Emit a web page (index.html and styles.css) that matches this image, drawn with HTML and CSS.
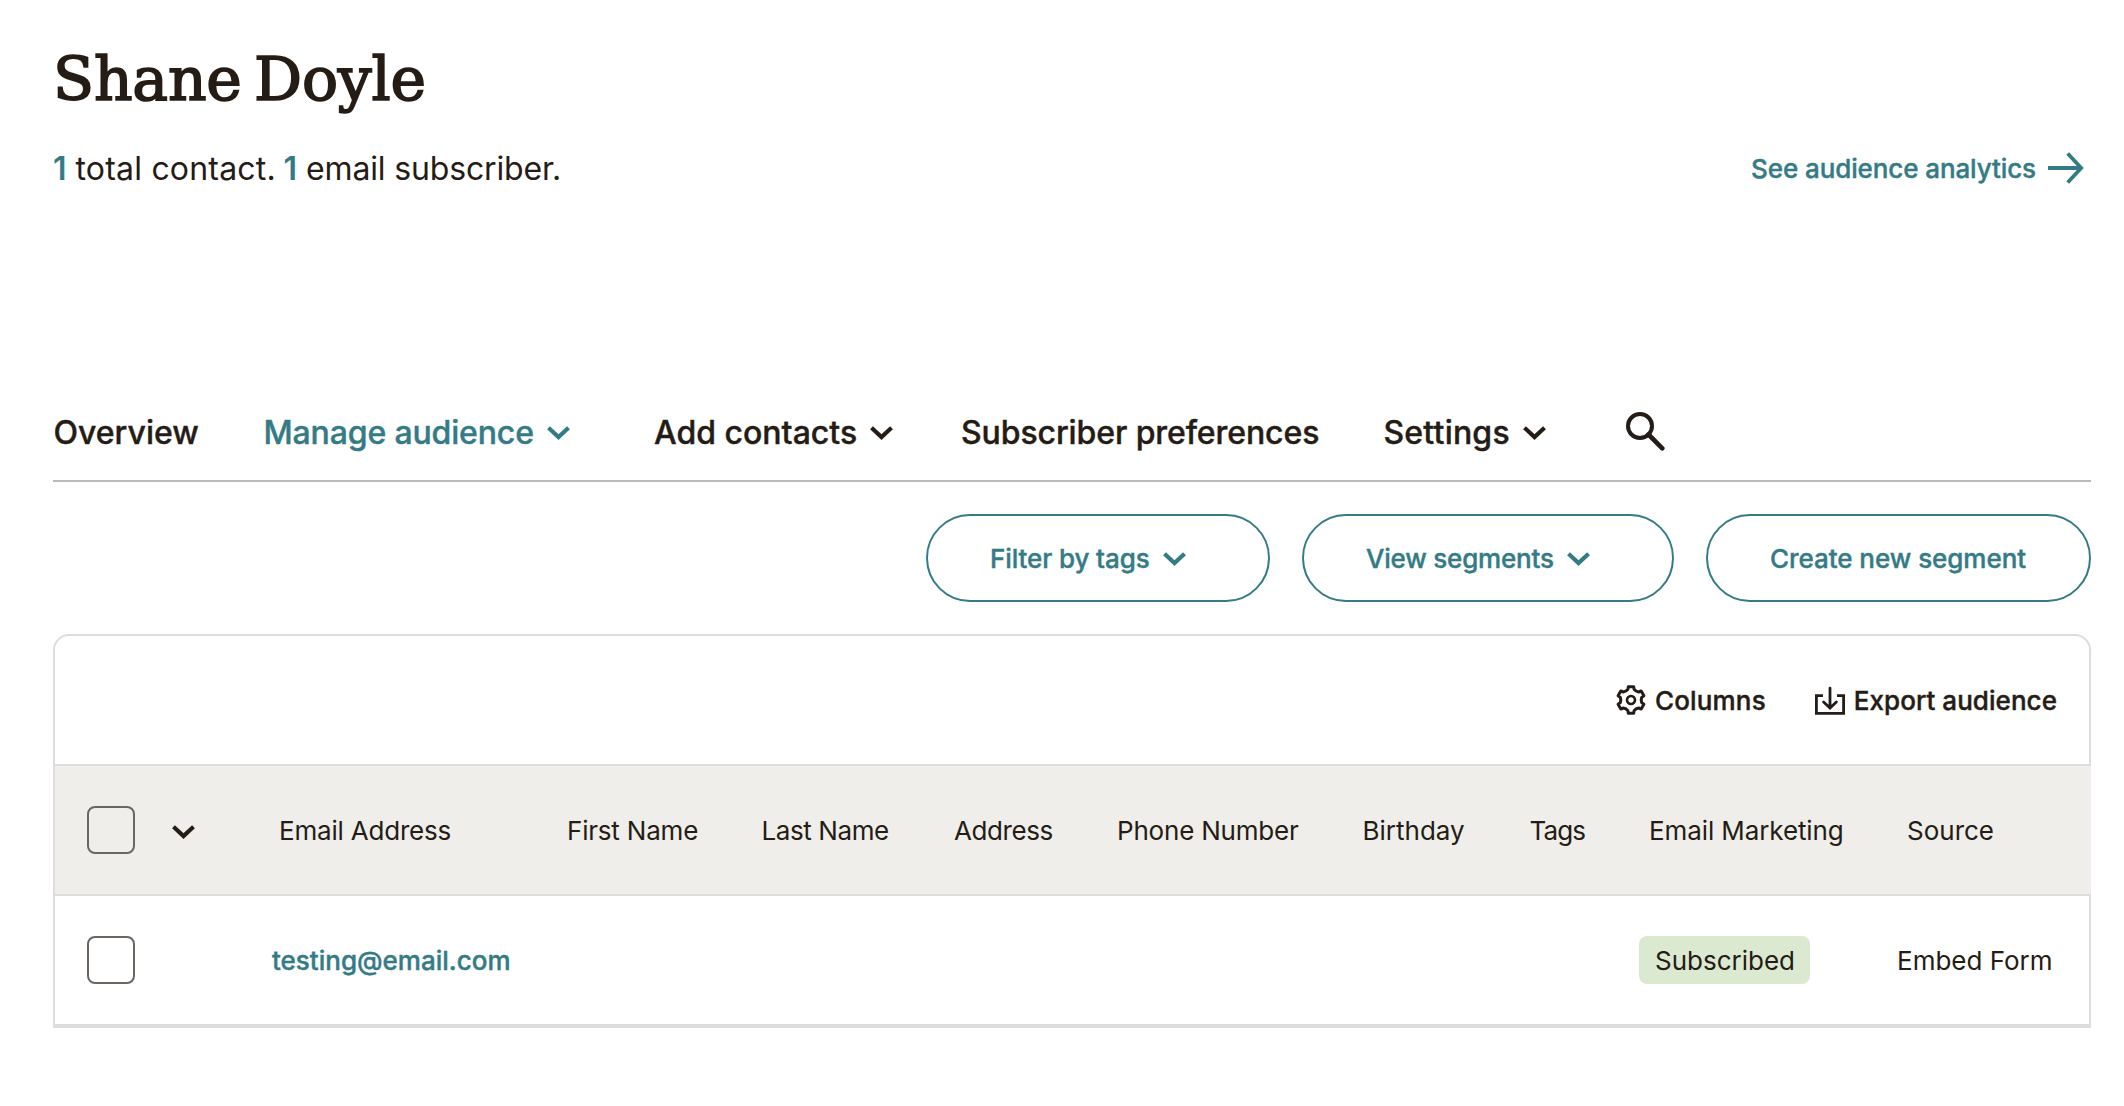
FILE: index.html
```html
<!DOCTYPE html>
<html lang="en">
<head>
<meta charset="utf-8">
<title>Audience contacts</title>
<link rel="stylesheet" href="styles.css">
</head>
<body>
<svg class="defs" width="0" height="0" aria-hidden="true">
  <symbol id="chevron" viewBox="0 0 23 14"><path d="M1.5 1.7 11.5 11.1 21.5 1.7" fill="none" stroke="currentColor" stroke-width="4.1"/></symbol>
</svg>
<main class="page">
  <h1 class="title">Shane Doyle</h1>
  <div class="summary">
    <p class="counts"><a class="count">1</a><span class="total">total contact.</span><a class="count">1</a><span class="subs">email subscriber.</span></p>
    <a class="analytics">See audience analytics
      <svg width="36" height="32" viewBox="0 0 36 32"><path d="M0 16H33M19.7 1.5 33.2 16 19.7 30.5" fill="none" stroke="currentColor" stroke-width="3.8"/></svg>
    </a>
  </div>

  <nav class="nav">
    <a class="nav-item overview">Overview</a>
    <a class="nav-item active">Manage audience<svg class="chev"><use href="#chevron"/></svg></a>
    <a class="nav-item add">Add contacts<svg class="chev"><use href="#chevron"/></svg></a>
    <a class="nav-item">Subscriber preferences</a>
    <a class="nav-item settings">Settings<svg class="chev"><use href="#chevron"/></svg></a>
    <a class="nav-item"><svg class="search" width="39" height="39" viewBox="0 0 39 39"><g fill="none" stroke="currentColor"><circle cx="14" cy="14" r="12" stroke-width="4"/><path d="M22.5 22.5 36.3 36.3" stroke-width="4.6" stroke-linecap="round"/></g></svg></a>
  </nav>

  <div class="actions">
    <button class="btn btn-filter">Filter by tags<svg class="chev"><use href="#chevron"/></svg></button>
    <button class="btn btn-view">View segments<svg class="chev"><use href="#chevron"/></svg></button>
    <button class="btn btn-create">Create new segment</button>
  </div>

  <section class="panel">
    <div class="toolbar">
      <a class="tool columns">
        <svg width="30" height="30" viewBox="-15 -15 30 30"><g fill="none" stroke="currentColor" stroke-linejoin="round"><path stroke-width="3" d="M-2.7-13.3H2.7L3.1-10.6Q4.8-8.4 7.6-8L10.2-9 12.9-4.3 10.7-2.6Q9.7 0 10.7 2.6L12.9 4.3 10.2 9 7.6 8Q4.8 8.4 3.1 10.6L2.7 13.3H-2.7L-3.1 10.6Q-4.8 8.4-7.6 8L-10.2 9-12.9 4.3-10.7 2.6Q-9.7 0-10.7-2.6L-12.9-4.3-10.2-9-7.6-8Q-4.8-8.4-3.1-10.6Z"/><circle r="4" stroke-width="2.6"/></g></svg>
        Columns
      </a>
      <a class="tool export">
        <svg width="30" height="30" viewBox="0 0 30 30"><g fill="none" stroke="currentColor" stroke-width="2.8"><path d="M8 10.6H1.4V28.3H28.6V10.6H22"/><path d="M15 3.2V23M8.6 17 15 23 21.4 17" stroke-linecap="round"/></g></svg>
        Export audience
      </a>
    </div>
    <div class="row head">
      <span class="check"></span>
      <span class="cell-chev"><svg class="chev"><use href="#chevron"/></svg></span>
      <span>Email Address</span>
      <span>First Name</span>
      <span class="snug">Last Name</span>
      <span class="snug">Address</span>
      <span>Phone Number</span>
      <span class="loose">Birthday</span>
      <span class="tight">Tags</span>
      <span class="marketing">Email Marketing</span>
      <span class="loose">Source</span>
    </div>
    <div class="row body">
      <span class="check"></span>
      <a class="email">testing@email.com</a>
      <span class="status"><span class="badge">Subscribed</span></span>
      <span class="source">Embed Form</span>
    </div>
  </section>
</main>
</body>
</html>
```
FILE: styles.css
```css
* { box-sizing: border-box; }

body {
  margin: 0;
  background: #fff;
  color: #241c15;
  font-family: Inter, "Liberation Sans", sans-serif;
  font-size: 26px;
}

.defs { position: absolute; }
svg { display: block; flex: none; }

.page { padding: 41px 33px 0 53px; }

.title {
  margin: 0;
  font: 400 60px/76px "DejaVu Serif", serif;
  letter-spacing: -0.2px;
  word-spacing: -6.5px;
  -webkit-text-stroke: 1.7px #241c15;
}

.summary {
  display: flex;
  justify-content: space-between;
  align-items: center;
  height: 48px;
  margin-top: 27px;
  padding-right: 7px;
}
.counts {
  display: flex;
  margin: 0;
  padding-top: 2px;
  font-size: 32px;
  line-height: 48px;
}
.count { color: #347b86; font-weight: 600; width: 22.5px; }
.total { width: 208px; letter-spacing: 0.2px; }
.subs { letter-spacing: -0.15px; }

.analytics, .nav, .btn, .toolbar, .email {
  font-weight: 500;
  -webkit-text-stroke: 0.4px currentColor;
}
.analytics {
  display: flex;
  align-items: center;
  gap: 12px;
  color: #347b86;
  letter-spacing: -0.1px;
}

.nav {
  display: grid;
  grid-template-columns: 210.5px 390.5px 307px 422.5px 242px 1fr;
  align-items: center;
  height: 98px;
  margin-top: 192px;
  border-bottom: 2px solid #bababa;
  font-size: 32px;
  letter-spacing: -0.1px;
}
.nav-item { display: flex; align-items: center; gap: 13px; }
.nav-item.overview { padding-left: 0.5px; letter-spacing: 0; }
.nav-item.active { color: #347b86; letter-spacing: -0.15px; }
.nav-item.add { letter-spacing: 0; }
.nav-item.settings { letter-spacing: 0.2px; }
.chev { width: 23px; height: 14px; margin-top: 2px; }
.search { margin-top: -1px; }

.actions {
  display: flex;
  justify-content: flex-end;
  gap: 32px;
  margin-top: 32px;
}
.btn {
  display: flex;
  align-items: center;
  gap: 13px;
  height: 88px;
  padding: 0 0 0 62px;
  border: 2px solid #347b86;
  border-radius: 44px;
  background: #fff;
  color: #347b86;
  font-family: Inter, "Liberation Sans", sans-serif;
  font-size: 26px;
  letter-spacing: -0.1px;
}
.btn-filter { width: 344px; }
.btn-view { width: 372px; letter-spacing: -0.2px; }
.btn-create { width: 385px; letter-spacing: -0.05px; }

.panel {
  margin-top: 32px;
  border: solid #dddddc;
  border-width: 0 0 4px;
}
.toolbar {
  display: flex;
  justify-content: flex-end;
  align-items: center;
  gap: 49px;
  height: 130px;
  padding-right: 32px;
  border: 2px solid #dddddc;
  border-bottom: 0;
  border-radius: 16px 16px 0 0;
}
.tool { display: flex; align-items: center; gap: 9px; }
.columns { letter-spacing: 0.15px; }
.export { letter-spacing: 0.05px; }

.row {
  display: grid;
  grid-template-columns: 85px 97px 288px 194.5px 192.5px 163px 245.5px 167px 119.5px 258px 1fr;
  align-items: center;
  height: 130px;
  padding-left: 32px;
  border: 2px solid #dddddc;
  border-bottom: 0;
  white-space: nowrap;
}
.head {
  border-right: 0;
  background: #efeeea;
  letter-spacing: -0.2px;
}
.head > span:nth-child(n+3) { padding-left: 10px; }
.head > .snug { letter-spacing: -0.4px; }
.head > .tight { letter-spacing: -0.9px; }
.head > .loose { letter-spacing: 0; padding-left: 10.5px; }
.head > .marketing { letter-spacing: -0.1px; padding-left: 10.5px; }
.cell-chev .chev { margin-top: 3px; margin-left: -0.5px; }
.check {
  width: 48px;
  height: 48px;
  border: 2px solid #6c6560;
  border-radius: 8px;
}
.email { grid-column: 3; padding-left: 3px; color: #347b86; }
.status { grid-column: 10; }
.badge {
  display: flex;
  align-items: center;
  width: 171px;
  height: 48px;
  padding-left: 16px;
  border-radius: 8px;
  background: #dbe9d0;
}
.source { grid-column: 11; }
```
